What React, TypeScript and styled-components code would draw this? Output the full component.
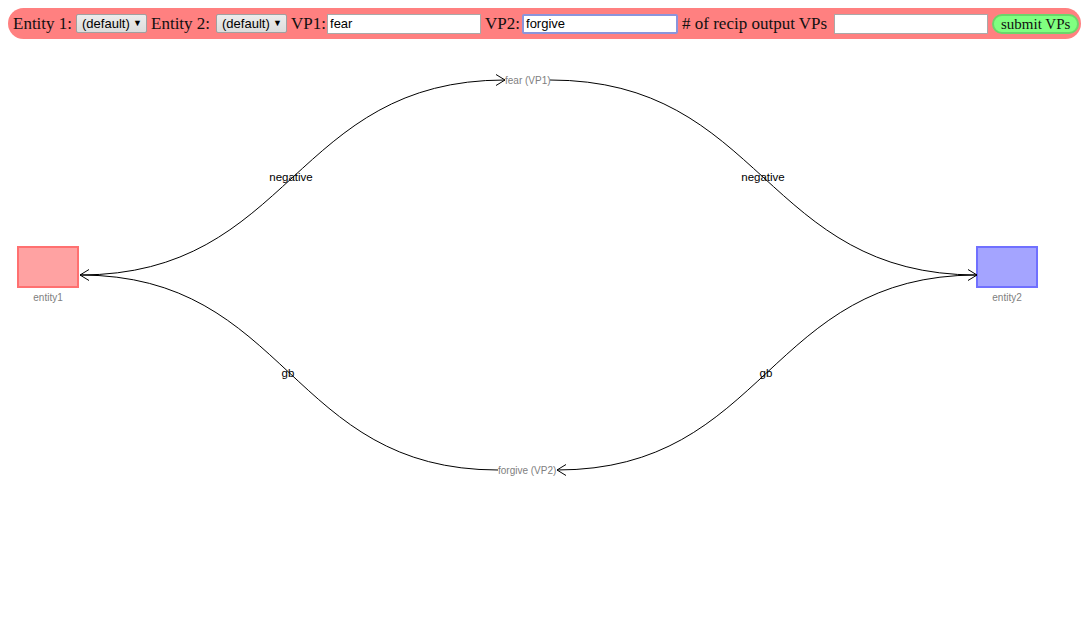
import React from "react";
import styled, { createGlobalStyle } from "styled-components";

const Global = createGlobalStyle`
  html, body { margin: 0; padding: 0; background: #fff; }
  body { margin: 8px; font-family: "Liberation Serif", "DejaVu Serif", serif; }
`;

const Toolbar = styled.form`
  display: flex;
  align-items: center;
  gap: 4px;
  height: 31px;
  padding: 0 8px 0 5px;
  background: #ff8080;
  border-radius: 16px;
  box-sizing: border-box;
  color: #111;
  white-space: nowrap;
  & > * { flex-shrink: 0; }
`;

const Label = styled.span<{ $w?: number }>`
  font-family: "Liberation Serif", "DejaVu Serif", serif;
  font-size: 17px;
  line-height: 20px;
  ${(p) => (p.$w ? `width: ${p.$w}px;` : "")}
`;

const FakeSelect = styled.div`
  display: flex;
  align-items: center;
  justify-content: space-between;
  box-sizing: border-box;
  width: 71px;
  height: 19px;
  padding: 0 4px 0 5px;
  background: linear-gradient(#ececec, #dcdcdc);
  border: 1px solid #a0a0a0;
  border-radius: 2px;
  font-family: "Liberation Sans", Arial, sans-serif;
  font-size: 13px;
  color: #000;
`;

const Caret = styled.span`
  font-size: 9px;
  line-height: 1;
`;

const TextInput = styled.input<{ $focused?: boolean }>`
  box-sizing: border-box;
  width: ${(p) => (p.$focused ? "156px" : "154px")};
  height: 20px;
  margin: 0;
  padding: 0 2px;
  border: ${(p) => (p.$focused ? "2px solid #8a95dc" : "1px solid #a9a9a9")};
  border-radius: ${(p) => (p.$focused ? "2px" : "0")};
  background: #fff;
  font-family: "Liberation Sans", Arial, sans-serif;
  font-size: 13px;
  color: #000;
  outline: none;
`;

const SubmitButton = styled.button`
  box-sizing: border-box;
  height: 20px;
  margin-left: 0;
  padding: 0 7px;
  background: #80ff80;
  border: 2px solid #6ad66a;
  border-radius: 10px;
  font-family: "Liberation Serif", "DejaVu Serif", serif;
  font-size: 15px;
  line-height: 14px;
  color: #111;
`;

const Canvas = styled.svg`
  display: block;
  width: 1073px;
  height: 574px;
`;

const EdgeLabel = styled.text`
  font-family: "Liberation Sans", Arial, sans-serif;
  font-size: 11.5px;
  fill: #000;
`;

const NodeLabel = styled.text`
  font-family: "Liberation Sans", Arial, sans-serif;
  font-size: 10px;
  fill: #808080;
`;

const Edge = styled.path`
  fill: none;
  stroke: #000;
  stroke-width: 1;
`;

type Curve = { x1: number; y1: number; x2: number; y2: number };

const curves: Curve[] = [
  { x1: 80, y1: 275, x2: 505, y2: 80 },
  { x1: 550, y1: 80, x2: 977, y2: 275 },
  { x1: 977, y1: 275, x2: 557, y2: 470 },
  { x1: 498, y1: 470, x2: 80, y2: 275 },
];

const edgeLabels = [
  { x: 291, y: 177, t: "negative" },
  { x: 763, y: 177, t: "negative" },
  { x: 288, y: 373, t: "gb" },
  { x: 766, y: 373, t: "gb" },
];

function curvePath(c: Curve) {
  const mx = (c.x1 + c.x2) / 2;
  return `M${c.x1},${c.y1} C${mx},${c.y1} ${mx},${c.y2} ${c.x2},${c.y2}`;
}

export default function App() {
  return (
    <>
      <Global />
      <Toolbar onSubmit={(e) => e.preventDefault()}>
        <Label>Entity 1:</Label>
        <FakeSelect>
          (default) <Caret>▼</Caret>
        </FakeSelect>
        <Label $w={61}>Entity 2:</Label>
        <FakeSelect>
          (default) <Caret>▼</Caret>
        </FakeSelect>
        <Label $w={32}>VP1:</Label>
        <TextInput defaultValue="fear" />
        <Label $w={33}>VP2:</Label>
        <TextInput defaultValue="forgive" $focused />
        <Label $w={148}># of recip output VPs</Label>
        <TextInput defaultValue="" />
        <SubmitButton type="submit">submit VPs</SubmitButton>
      </Toolbar>
      <Canvas viewBox="8 39 1073 574">
        <defs>
          <marker
            id="arrow"
            viewBox="0 -6 12 12"
            refX="11"
            refY="0"
            markerWidth="12"
            markerHeight="12"
            markerUnits="userSpaceOnUse"
            orient="auto"
          >
            <path d="M2,-5.5 L11,0 L2,5.5" fill="none" stroke="#000" strokeWidth="1" />
          </marker>
        </defs>
        <rect x="18" y="247" width="60" height="40" fill="#ffa2a2" stroke="#ff7070" strokeWidth="2" />
        <rect x="977" y="247" width="60" height="40" fill="#a4a4ff" stroke="#7070ff" strokeWidth="2" />
        <NodeLabel x="48" y="301" textAnchor="middle">entity1</NodeLabel>
        <NodeLabel x="1007" y="301" textAnchor="middle">entity2</NodeLabel>
        {curves.map((c, i) => (
          <Edge key={i} d={curvePath(c)} markerEnd="url(#arrow)" />
        ))}
        <NodeLabel x="505" y="84">fear (VP1)</NodeLabel>
        <NodeLabel x="498" y="474">forgive (VP2)</NodeLabel>
        {edgeLabels.map((l, i) => (
          <EdgeLabel key={i} x={l.x} y={l.y + 4} textAnchor="middle">
            {l.t}
          </EdgeLabel>
        ))}
      </Canvas>
    </>
  );
}
